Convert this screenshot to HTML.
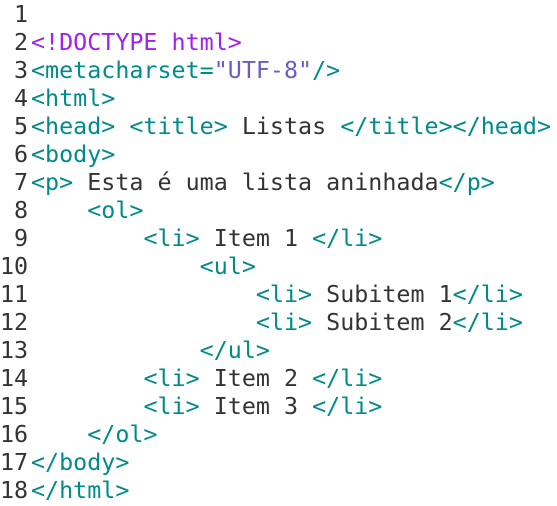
<!DOCTYPE html>
<html><head><meta charset="utf-8"><style>
body{margin:0;background:#fff;width:557px;height:506px;overflow:hidden}
pre{margin:0;padding:0;font-family:"DejaVu Sans Mono","Liberation Mono",monospace;font-size:23.35px;line-height:28px;color:#333;position:absolute;top:0}
.n{left:0;width:28px;text-align:right;color:#333}
.c{left:31px}
.t{color:#008b8b}.d{color:#a020f0}.s{color:#6a5acd}
</style></head><body>
<pre class="n">1
2
3
4
5
6
7
8
9
10
11
12
13
14
15
16
17
18</pre>
<pre class="c">&#8203;
<span class="d">&lt;!DOCTYPE html&gt;</span>
<span class="t">&lt;metacharset=</span><span class="s">"UTF-8"</span><span class="t">/&gt;</span>
<span class="t">&lt;html&gt;</span>
<span class="t">&lt;head&gt; &lt;title&gt;</span> Listas <span class="t">&lt;/title&gt;&lt;/head&gt;</span>
<span class="t">&lt;body&gt;</span>
<span class="t">&lt;p&gt;</span> Esta é uma lista aninhada<span class="t">&lt;/p&gt;</span>
    <span class="t">&lt;ol&gt;</span>
        <span class="t">&lt;li&gt;</span> Item 1 <span class="t">&lt;/li&gt;</span>
            <span class="t">&lt;ul&gt;</span>
                <span class="t">&lt;li&gt;</span> Subitem 1<span class="t">&lt;/li&gt;</span>
                <span class="t">&lt;li&gt;</span> Subitem 2<span class="t">&lt;/li&gt;</span>
            <span class="t">&lt;/ul&gt;</span>
        <span class="t">&lt;li&gt;</span> Item 2 <span class="t">&lt;/li&gt;</span>
        <span class="t">&lt;li&gt;</span> Item 3 <span class="t">&lt;/li&gt;</span>
    <span class="t">&lt;/ol&gt;</span>
<span class="t">&lt;/body&gt;</span>
<span class="t">&lt;/html&gt;</span></pre>
</body></html>
